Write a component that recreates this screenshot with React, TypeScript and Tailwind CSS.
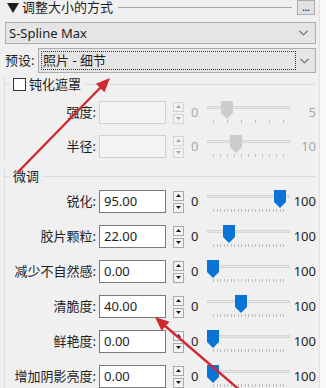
import React from 'react';

type SliderRow = {
  label: string;
  value: string;
  pos: number;
  max: string;
  ticks: number;
  disabled?: boolean;
};

const maskRows: SliderRow[] = [
  { label: '强度:', value: '', pos: 0.2, max: '5', ticks: 6, disabled: true },
  { label: '半径:', value: '', pos: 0.32, max: '10', ticks: 11, disabled: true },
];

const tuneRows: SliderRow[] = [
  { label: '锐化:', value: '95.00', pos: 0.95, max: '100', ticks: 21 },
  { label: '胶片颗粒:', value: '22.00', pos: 0.22, max: '100', ticks: 21 },
  { label: '减少不自然感:', value: '0.00', pos: 0, max: '100', ticks: 21 },
  { label: '清脆度:', value: '40.00', pos: 0.4, max: '100', ticks: 21 },
  { label: '鲜艳度:', value: '0.00', pos: 0, max: '100', ticks: 21 },
  { label: '增加阴影亮度:', value: '0.00', pos: 0, max: '100', ticks: 21 },
];

const Chevron = () => (
  <svg width="9" height="6" viewBox="0 0 9 6" className="shrink-0">
    <polyline points="0.5,0.8 4.5,4.8 8.5,0.8" fill="none" stroke="#606060" strokeWidth="1.1" />
  </svg>
);

const Spinner = ({ disabled }: { disabled?: boolean }) => {
  const box = disabled
    ? 'border-[#d4d4d4] bg-[#f2f2f2]'
    : 'border-[#a9a9a9] bg-[#f4f4f4]';
  const fill = disabled ? '#a8a8a8' : '#1a1a1a';
  return (
    <div className="ml-[7px] flex h-[22px] w-[11px] flex-col justify-between">
      <div className={`flex h-[10px] items-center justify-center border ${box}`}>
        <svg width="5" height="3" viewBox="0 0 5 3">
          <polygon points="0,3 5,3 2.5,0" fill={fill} />
        </svg>
      </div>
      <div className={`flex h-[10px] items-center justify-center border ${box}`}>
        <svg width="5" height="3" viewBox="0 0 5 3">
          <polygon points="0,0 5,0 2.5,3" fill={fill} />
        </svg>
      </div>
    </div>
  );
};

const Row = ({ row }: { row: SliderRow }) => {
  const muted = row.disabled;
  return (
    <div className="flex h-[23px] items-center">
      <div className="w-[91px] text-right text-[#1e1e1e]">{row.label}</div>
      <div
        className={`ml-[3px] flex h-[23px] w-[67px] items-center border pl-[4px] ${
          muted ? 'border-[#d0d0d0] bg-[#f3f3f3]' : 'border-[#7a7a7a] bg-white'
        }`}
      >
        {row.value}
      </div>
      <Spinner disabled={muted} />
      <div className={`ml-[7px] w-[8px] ${muted ? 'text-[#a8a8a8]' : 'text-[#1e1e1e]'}`}>0</div>
      <div className="relative ml-[8px] h-[23px] w-[83px]">
        <div className="absolute left-0 right-0 top-[5px] h-[3px] border border-[#d6d6d6] bg-[#e7e7e7]" />
        <svg
          width="12"
          height="18"
          viewBox="0 0 12 18"
          className="absolute top-0"
          style={{ left: `${row.pos * 71}px` }}
        >
          <polygon points="0,0 12,0 12,12 6,18 0,12" fill={muted ? '#cccccc' : '#0a74d6'} />
        </svg>
        <div className="absolute left-[6px] right-[6px] top-[19px] flex justify-between">
          {Array.from({ length: row.ticks }).map((_, i) => (
            <div key={i} className="h-[3px] w-px bg-[#bdbdbd]" />
          ))}
        </div>
      </div>
      <div className={`flex-1 text-right ${muted ? 'text-[#a8a8a8]' : 'text-[#1e1e1e]'}`}>{row.max}</div>
    </div>
  );
};

export default function App() {
  return (
    <div
      className="relative flex h-[388px] w-[326px] overflow-hidden bg-[#f9f9f9] text-[13px] leading-none text-[#1e1e1e]"
      style={{ fontFamily: '"Noto Sans", "Noto Sans CJK SC", sans-serif' }}
    >
      <div className="flex w-[320px] shrink-0 flex-col border-r border-[#e2e2e2] bg-[#f0f0f0] pr-[3px]">
        {/* section header */}
        <div className="flex h-[16px] items-center">
          <svg width="12" height="10" viewBox="0 0 12 10" className="ml-[7px] shrink-0">
            <polygon points="0,0 12,0 6,10" fill="#1e1e1e" />
          </svg>
          <span className="ml-[3px] text-[13px]">调整大小的方式</span>
          <div className="mx-[5px] h-px flex-1 bg-[#a8a8a8]" />
          <div className="mr-[1px] flex h-[15px] w-[18px] items-end justify-center border border-[#adadad] bg-[#e1e1e1] pb-[2px] text-[9px] font-bold">
            ...
          </div>
        </div>

        <div className="ml-[5px] mt-[7px] flex h-[25px] items-center justify-between border border-[#acacac] bg-[#e5e5e5] pl-[3px] pr-[7px]">
          <span>S-Spline Max</span>
          <Chevron />
        </div>

        <div className="ml-[5px] mt-[4px] flex h-[25px] items-center">
          <span className="w-[33px]">预设:</span>
          <div className="flex h-[25px] flex-1 items-center border border-[#acacac] bg-[#e5e5e5] p-[2px]">
            <div className="flex h-full flex-1 items-center border border-dotted border-[#333] pl-[1px]">
              照片 - 细节
            </div>
            <div className="flex w-[17px] justify-center">
              <Chevron />
            </div>
          </div>
        </div>

        {/* mask group */}
        <div className="ml-[4px] mt-[4px] flex flex-col border-l border-[#dcdcdc]">
          <div className="flex h-[14px] items-center">
            <div className="h-px w-[5px] bg-[#dcdcdc]" />
            <div className="ml-[3px] h-[13px] w-[13px] border border-[#333] bg-white" />
            <span className="ml-[3px]">钝化遮罩</span>
            <div className="ml-[3px] h-px flex-1 bg-[#dcdcdc]" />
          </div>
          <div className="mt-[10px] flex flex-col gap-[11px]">
            {maskRows.map((r) => (
              <Row key={r.label} row={r} />
            ))}
          </div>
        </div>

        {/* fine tuning group */}
        <div className="ml-[4px] mt-[11px] flex flex-col border-l border-[#dcdcdc]">
          <div className="flex h-[14px] items-center">
            <div className="h-px w-[5px] bg-[#dcdcdc]" />
            <span className="ml-[3px]">微调</span>
            <div className="ml-[3px] h-px flex-1 bg-[#dcdcdc]" />
          </div>
          <div className="mt-[7px] flex flex-col gap-[12px]">
            {tuneRows.map((r) => (
              <Row key={r.label} row={r} />
            ))}
          </div>
        </div>
      </div>

      {/* annotation arrows */}
      <svg className="pointer-events-none absolute left-0 top-0" width="326" height="388" viewBox="0 0 326 388">
        <line x1="18" y1="172" x2="101" y2="87" stroke="#cf2a2f" strokeWidth="2.4" />
        <polygon points="110,78 104.5,92.2 95.9,83.8" fill="#cf2a2f" />
        <line x1="242" y1="392" x2="164" y2="325" stroke="#cf2a2f" strokeWidth="2.4" />
        <polygon points="155,317 169.5,321.8 161.5,330.8" fill="#cf2a2f" />
      </svg>
    </div>
  );
}
